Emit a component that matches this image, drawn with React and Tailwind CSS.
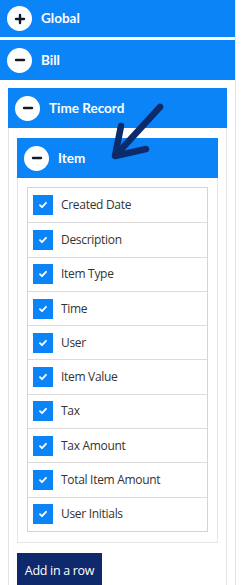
import React from 'react';

const fields = [
  'Created Date',
  'Description',
  'Item Type',
  'Time',
  'User',
  'Item Value',
  'Tax',
  'Tax Amount',
  'Total Item Amount',
  'User Initials',
];

// white round toggle with a plus or minus
function Toggle({ open }) {
  return (
    <span className="flex h-[25px] w-[25px] shrink-0 items-center justify-center rounded-full bg-white">
      <svg width="12" height="12" viewBox="0 0 12 12">
        <path d="M2 6h8" stroke="#111827" strokeWidth="2.4" strokeLinecap="round" />
        {!open && <path d="M6 2v8" stroke="#111827" strokeWidth="2.4" strokeLinecap="round" />}
      </svg>
    </span>
  );
}

function Header({ title, open, className }) {
  return (
    <div className={`flex shrink-0 items-center gap-[9px] bg-[#0b84f7] pl-[7px] text-[13.5px] font-bold text-white ${className}`}>
      <Toggle open={open} />
      <span>{title}</span>
    </div>
  );
}

export default function App() {
  return (
    <div className="relative h-[585px] w-[244px] overflow-hidden bg-white font-['Lato',sans-serif]">
      <div className="flex min-h-full w-[236px] flex-col border-r border-[#e3e3e3]">
        <Header title="Global" open={false} className="h-[37px] w-[235px]" />
        <div className="h-[3px] shrink-0" />
        <Header title="Bill" open className="h-[40px] w-[235px]" />

        <div className="shrink-0 px-2 pt-2">
          {/* Time Record section */}
          <div className="border border-[#e3e3e3]">
            <Header title="Time Record" open className="-mx-px -mt-px h-[40px]" />
            <div className="px-2 pt-[10px]">
              {/* Item section */}
              <div className="border border-[#e6e6e6]">
                <Header title="Item" open className="-mx-px -mt-px h-[40px]" />
                <div className="px-[9px] pt-[9px] pb-[10px]">
                  <div className="flex flex-col border border-[#d4d4d4] font-['Open_Sans',sans-serif] text-[12px] text-[#333]">
                    {fields.map((f, i) => (
                      <div
                        key={f}
                        className={`flex h-[34.3px] items-center gap-2 pl-[5px] ${i > 0 ? 'border-t border-[#dcdcdc]' : ''}`}
                      >
                        <span className="flex h-[20px] w-[20px] items-center justify-center bg-[#0b84f7]">
                          <svg width="10" height="10" viewBox="0 0 10 10">
                            <path d="M2 5.2l2 2 4-4.4" fill="none" stroke="white" strokeWidth="1.8" strokeLinecap="round" strokeLinejoin="round" />
                          </svg>
                        </span>
                        <span className="tracking-[-0.3px]">{f}</span>
                      </div>
                    ))}
                  </div>
                </div>
              </div>

              <button className="mt-[10px] mb-4 h-[36px] w-[85px] bg-[#0f2a6c] font-['Open_Sans',sans-serif] text-[12.5px] tracking-[-0.3px] text-white">
                Add in a row
              </button>
            </div>
          </div>
        </div>
      </div>

      {/* annotation arrow drawn over the page */}
      <svg className="pointer-events-none absolute left-0 top-0" width="244" height="585">
        <g stroke="#0d2a6b" strokeWidth="6.5" strokeLinecap="round" strokeLinejoin="round" fill="none">
          <path d="M160 107L116 155" />
          <path d="M121 126L115 156L146 149" />
        </g>
      </svg>
    </div>
  );
}
